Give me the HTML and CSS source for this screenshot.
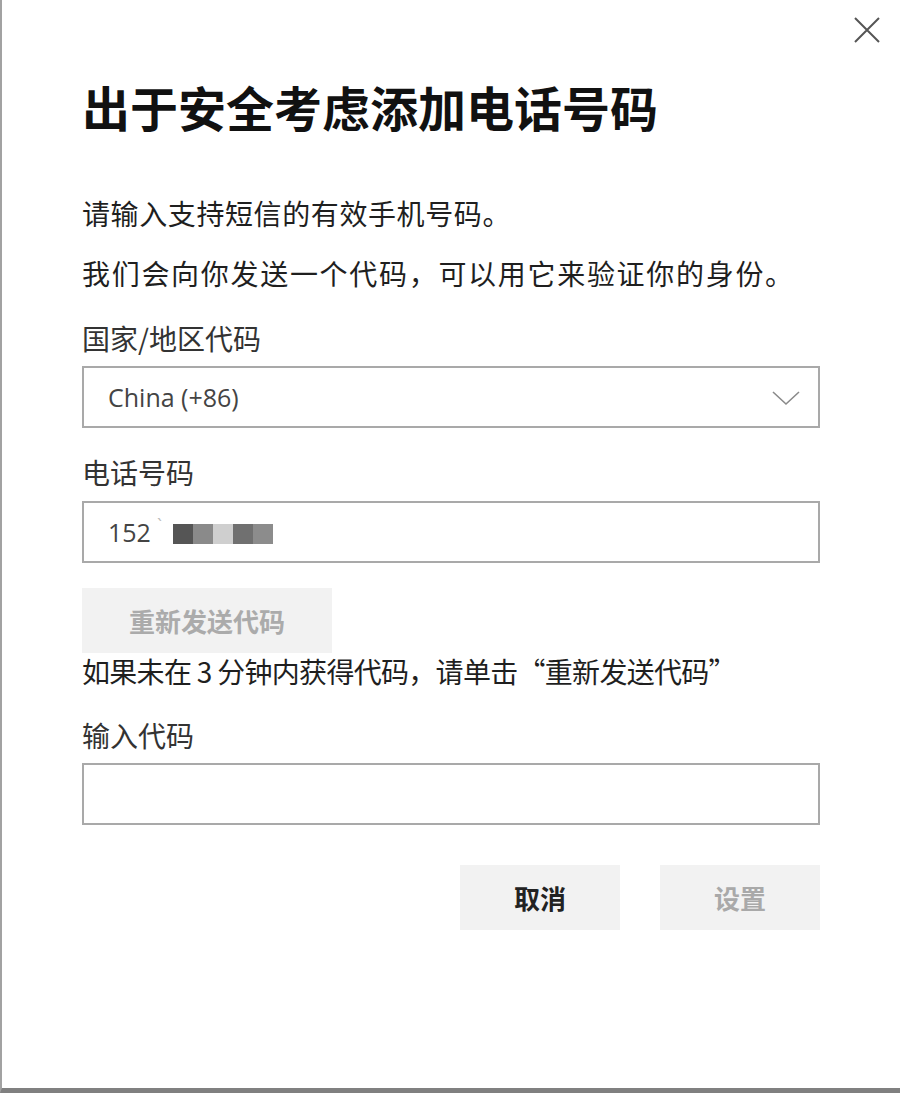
FILE: index.html
```html
<!DOCTYPE html>
<html lang="zh-CN">
<head>
<meta charset="utf-8">
<title>出于安全考虑添加电话号码</title>
<link rel="stylesheet" href="styles.css">
</head>
<body>
<div class="dialog">
  <div class="topbar">
    <button class="close" aria-label="关闭">
      <svg width="26" height="26" viewBox="0 0 26 26"><path d="M1 1 L25 25 M25 1 L1 25" stroke="#555" stroke-width="2" fill="none"/></svg>
    </button>
  </div>
  <h1 class="title">出于安全考虑添加电话号码</h1>
  <p class="text p1">请输入支持短信的有效手机号码。</p>
  <p class="text p2">我们会向你发送一个代码，可以用它来验证你的身份。</p>
  <div class="label l1">国家/地区代码</div>
  <div class="field select">
    <span class="value">China (+86)</span>
    <svg class="chev" width="28" height="16" viewBox="0 0 28 16"><path d="M1 2 L14 14 L27 2" stroke="#8a8a8a" stroke-width="1.6" fill="none"/></svg>
  </div>
  <div class="label l2">电话号码</div>
  <div class="field phone">
    <span class="value">152</span><span class="tick">`</span>
    <span class="mask">
      <i style="background:#555"></i><i style="background:#8a8a8a"></i><i style="background:#cfcfcf"></i><i style="background:#707070"></i><i style="background:#8c8c8c"></i>
    </span>
  </div>
  <button class="btn resend">重新发送代码</button>
  <p class="text hint">如果未在 3 分钟内获得代码，请单击“重新发送代码”</p>
  <div class="label l3">输入代码</div>
  <div class="field code"></div>
  <div class="actions">
    <button class="btn cancel">取消</button>
    <button class="btn set">设置</button>
  </div>
</div>
</body>
</html>
```
FILE: styles.css
```css
html, body {
  margin: 0;
  padding: 0;
  background: #fff;
}
.dialog {
  box-sizing: border-box;
  width: 900px;
  height: 1093px;
  border-left: 2px solid #a2a2a2;
  border-bottom: 5px solid #808080;
  padding: 0 80px 0 80px;
  font-family: "Noto Sans CJK SC", "Noto Sans", sans-serif;
  color: #1f1f1f;
  display: flex;
  flex-direction: column;
}
.topbar {
  height: 60px;
  display: flex;
  justify-content: flex-end;
  align-items: center;
  margin-right: -60px;
}
.close {
  border: 0;
  background: none;
  padding: 0;
  width: 26px;
  height: 26px;
  display: flex;
}
.title {
  margin: 22px 0 0 0;
  font-size: 48px;
  line-height: 48px;
  font-weight: 700;
  color: #111;
}
.text {
  margin: 0;
  font-size: 28px;
  line-height: 40px;
  letter-spacing: 0.6px;
}
.p1 { margin-top: 63px; }
.p2 { margin-top: 20px; letter-spacing: 1.7px; }
.label {
  font-size: 28px;
  line-height: 40px;
  color: #333;
}
.l1 { margin-top: 25px; }
.l2 { margin-top: 24px; }
.l3 { margin-top: 26px; }
.field {
  box-sizing: border-box;
  height: 62px;
  border: 2px solid #a9a9a9;
  display: flex;
  align-items: center;
  padding: 0 16px 0 24px;
}
.l1 + .field { margin-top: 8px; }
.l2 + .field { margin-top: 9px; }
.l3 + .field { margin-top: 8px; }
.value {
  font-family: "Open Sans", "Noto Sans", sans-serif;
  font-size: 25px;
  color: #444;
}
.select {
  justify-content: space-between;
}
.chev { margin-right: 2px; margin-top: 2px; }
.tick {
  font-family: "Open Sans", sans-serif;
  font-size: 18px;
  color: #bbb;
  margin: -14px 0 0 6px;
}
.mask {
  display: flex;
  margin-left: 11px;
  margin-top: 4px;
}
.mask i {
  display: block;
  width: 20px;
  height: 20px;
}
.btn {
  border: 0;
  background: #f2f2f2;
  font-family: "Noto Sans CJK SC", sans-serif;
  font-size: 26px;
  font-weight: 700;
  height: 65px;
  padding: 0;
}
.resend {
  margin-top: 25px;
  width: 250px;
  color: #ababab;
}
.hint {
  line-height: 36px;
  letter-spacing: -0.7px;
}
.actions {
  margin-top: 40px;
  display: flex;
  justify-content: flex-end;
  gap: 40px;
}
.cancel, .set {
  width: 160px;
}
.cancel { color: #222; }
.set { color: #a9a9a9; }
```
